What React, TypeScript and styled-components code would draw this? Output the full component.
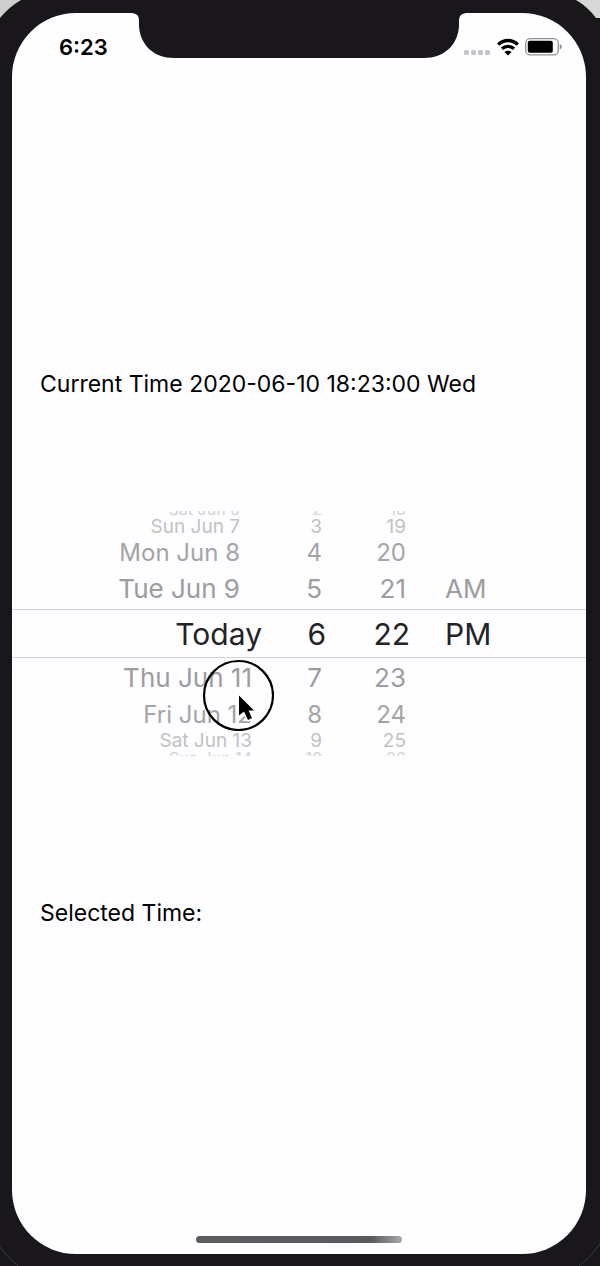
import React from "react";
import styled, { createGlobalStyle } from "styled-components";

type Depth = 0 | 1 | 2 | 3 | 4;
type Zone = "before" | "selected" | "after";

interface WheelRow {
  date: string;
  hour: string;
  minute: string;
  period?: string;
  depth: Depth;
  zone: Zone;
}

const rows: WheelRow[] = [
  { date: "Sat Jun 6", hour: "2", minute: "18", depth: 4, zone: "before" },
  { date: "Sun Jun 7", hour: "3", minute: "19", depth: 3, zone: "before" },
  { date: "Mon Jun 8", hour: "4", minute: "20", depth: 2, zone: "before" },
  { date: "Tue Jun 9", hour: "5", minute: "21", period: "AM", depth: 1, zone: "before" },
  { date: "Today", hour: "6", minute: "22", period: "PM", depth: 0, zone: "selected" },
  { date: "Thu Jun 11", hour: "7", minute: "23", depth: 1, zone: "after" },
  { date: "Fri Jun 12", hour: "8", minute: "24", depth: 2, zone: "after" },
  { date: "Sat Jun 13", hour: "9", minute: "25", depth: 3, zone: "after" },
  { date: "Sun Jun 14", hour: "10", minute: "26", depth: 4, zone: "after" },
];

// Rows shrink and fade as they turn away from the middle of the wheel.
const depthStyle = [
  { height: 49, size: 30, color: "#232325" },
  { height: 40, size: 26, color: "#9d9c9f" },
  { height: 33, size: 24, color: "#a5a4a7" },
  { height: 19, size: 19, color: "#c2c1c4" },
  { height: 6, size: 16, color: "#d3d2d5" },
];

const dateInset = { before: 22, selected: 0, after: 10 };

// The outermost rows are cut by the wheel's rim, each on its far side.
const rimAlign = { before: "flex-end", selected: "center", after: "flex-start" };

const GlobalStyle = createGlobalStyle`
  * { box-sizing: border-box; }
  body {
    margin: 0;
    background: #19171a;
    font-family: Inter, "Liberation Sans", sans-serif;
    color: #000;
  }
`;

const Device = styled.div`
  position: relative;
  display: flex;
  min-height: 100vh;
  padding: 13px 14px 12px 12px;
  overflow: hidden;
  background: #19171a;
`;

const Corner = styled.svg<{ $side: "left" | "right"; $edge: "top" | "bottom" }>`
  position: absolute;
  ${(p) => p.$side}: 0;
  ${(p) => p.$edge}: 0;
`;

const Screen = styled.div`
  position: relative;
  display: flex;
  flex: 1;
  flex-direction: column;
  min-width: 0;
  overflow: hidden;
  border-radius: 64px;
  background: #fefdff;
`;

const Notch = styled.svg`
  position: absolute;
  top: 0;
  left: calc(50% - 169px);
`;

const StatusBar = styled.header`
  display: flex;
  align-items: center;
  justify-content: space-between;
  height: 68px;
  padding: 0 24px 0 47px;
`;

const Clock = styled.time`
  font-size: 22px;
  font-weight: 600;
  line-height: 28px;
`;

const StatusIcons = styled.div`
  display: flex;
  align-items: center;
  gap: 6px;
`;

const Content = styled.main`
  display: flex;
  flex: 1;
  flex-direction: column;
  justify-content: center;
`;

const Label = styled.p`
  margin: 0;
  padding: 0 28px;
  font-size: 23px;
  line-height: 28px;
`;

const Picker = styled.section`
  position: relative;
  margin: 113px 0 143px;
`;

const Row = styled.div<{ $depth: Depth }>`
  display: grid;
  grid-template-columns: 162px 64px 84px 88px;
  grid-template-rows: 100%;
  justify-content: center;
  height: ${(p) => depthStyle[p.$depth].height}px;
  overflow: hidden;
  border: solid #d3d2d5;
  border-width: ${(p) => (p.$depth === 0 ? "1px 0" : "0")};
  color: ${(p) => depthStyle[p.$depth].color};
  font-size: ${(p) => depthStyle[p.$depth].size}px;
`;

const Cell = styled.button<{ $inset: number; $align: string; $start?: boolean }>`
  display: flex;
  align-items: ${(p) => p.$align};
  justify-content: ${(p) => (p.$start ? "flex-start" : "flex-end")};
  min-width: 0;
  min-height: 0;
  padding: ${(p) => (p.$start ? `0 0 0 ${p.$inset}px` : `0 ${p.$inset}px 0 0`)};
  border: 0;
  background: none;
  color: inherit;
  font: inherit;
  line-height: 1;
  white-space: nowrap;
`;

const Pointer = styled.svg`
  position: absolute;
  top: 148px;
  left: calc(50% - 97px);
  pointer-events: none;
`;

const HomeArea = styled.footer`
  display: flex;
  align-items: flex-end;
  justify-content: center;
  height: 38px;
  padding-bottom: 11px;
`;

const HomeBar = styled.div`
  width: 206px;
  height: 7px;
  border-radius: 4px;
  background: linear-gradient(90deg, #5c5b5e, #5a595c 85%, #a9a8ab);
`;

function SignalDots() {
  return (
    <svg width="27" height="18" viewBox="0 0 27 18" fill="#c6c5c8" aria-hidden="true">
      {[0, 7, 14, 21].map((x) => (
        <rect key={x} x={x} y="12" width="5" height="5" rx="1.5" />
      ))}
    </svg>
  );
}

function WifiIcon() {
  return (
    <svg width="22" height="18" viewBox="0 0 22 18" aria-hidden="true">
      <g fill="none" stroke="#000" strokeWidth="3.4">
        <path d="M1.2 6.6C6.8 1.1 15.2 1.1 20.8 6.6" />
        <path d="M5 10.8C8.4 7.5 13.6 7.5 17 10.8" />
      </g>
      <path d="M11 17.5L7.4 14.1C9.4 12.2 12.6 12.2 14.6 14.1Z" />
    </svg>
  );
}

function BatteryIcon() {
  return (
    <svg width="37" height="18" viewBox="0 0 37 18" aria-hidden="true">
      <rect x="0.7" y="0.7" width="32.6" height="16.2" rx="4.5" fill="none" stroke="#929194" strokeWidth="1.3" />
      <rect x="2.8" y="2.8" width="25" height="12" rx="2" />
      <path d="M34.8 6Q36.8 7 36.8 8.8T34.8 11.6Z" fill="#89888b" />
    </svg>
  );
}

export default function App() {
  return (
    <>
      <GlobalStyle />
      <Device>
        <Corner $side="left" $edge="top" width="24" height="20" aria-hidden="true">
          <path d="M0 0H21Q9 7 0 18Z" fill="#cfcecf" />
        </Corner>
        <Corner $side="right" $edge="top" width="24" height="20" aria-hidden="true">
          <path d="M24 0H0Q12 7 20 18H24Z" fill="#d9d8d9" />
        </Corner>
        <Corner $side="left" $edge="bottom" width="24" height="24" fill="none" aria-hidden="true">
          <path d="M0 5Q8 16 18 24" stroke="#3b3a3c" />
        </Corner>
        <Corner $side="right" $edge="bottom" width="24" height="24" fill="none" aria-hidden="true">
          <path d="M24 2Q15 15 3 24" stroke="#3b3a3c" />
        </Corner>
        <Screen>
          <Notch width="338" height="46" viewBox="0 0 338 46" aria-hidden="true">
            <path
              d="M0 0C6 0 9 2 9 8V13C10 32 24 45 44 45H294C314 45 328 32 329 13V8C329 2 332 0 338 0Z"
              fill="#19171a"
            />
          </Notch>
          <StatusBar>
            <Clock>6:23</Clock>
            <StatusIcons>
              <SignalDots />
              <WifiIcon />
              <BatteryIcon />
            </StatusIcons>
          </StatusBar>
          <Content>
            <Label>Current Time 2020-06-10 18:23:00 Wed</Label>
            <Picker aria-label="Date and time">
              {rows.map((row) => {
                const selected = row.zone === "selected";
                const inset = selected ? 0 : 4;
                const align = row.depth === 4 ? rimAlign[row.zone] : "center";
                return (
                  <Row key={row.date} $depth={row.depth}>
                    <Cell type="button" aria-pressed={selected} $align={align} $inset={dateInset[row.zone]}>
                      {row.date}
                    </Cell>
                    <Cell type="button" aria-pressed={selected} $align={align} $inset={inset}>
                      {row.hour}
                    </Cell>
                    <Cell type="button" aria-pressed={selected} $align={align} $inset={inset}>
                      {row.minute}
                    </Cell>
                    {row.period && (
                      <Cell type="button" aria-pressed={selected} $align={align} $inset={35} $start>
                        {row.period}
                      </Cell>
                    )}
                  </Row>
                );
              })}
              <Pointer width="72" height="72" viewBox="0 0 72 72" aria-hidden="true">
                <circle cx="36.500" cy="36.500" r="34.500" fill="none" stroke="#000" strokeWidth="2.200" />
                <path
                  d="M37 36.500V56.500L42 52.500L46 61L50 59L46.500 51.500H52Z"
                  fill="#000"
                  stroke="#fff"
                  strokeWidth="3"
                  strokeLinejoin="round"
                  paintOrder="stroke"
                />
              </Pointer>
            </Picker>
            <Label>Selected Time:</Label>
          </Content>
          <HomeArea>
            <HomeBar />
          </HomeArea>
        </Screen>
      </Device>
    </>
  );
}
